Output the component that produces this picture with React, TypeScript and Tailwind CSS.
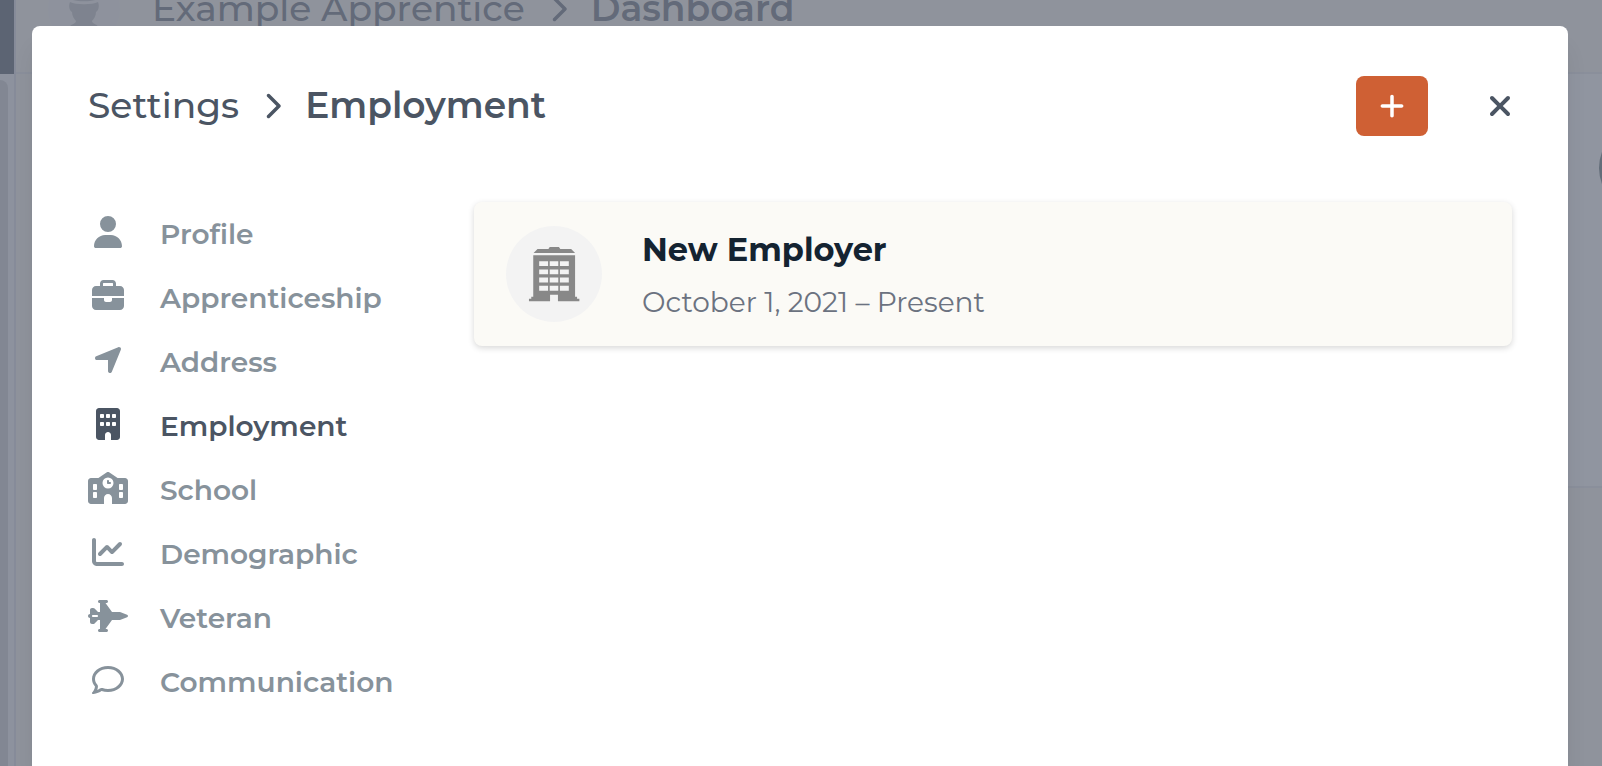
import React, { useState } from 'react';
import {
  FaBriefcase,
  FaBuilding,
  FaChartLine,
  FaChevronRight,
  FaJetFighter,
  FaLocationArrow,
  FaPlus,
  FaRegComment,
  FaSchool,
  FaUser,
  FaXmark,
} from 'react-icons/fa6';

const navItems = [
  { name: 'Profile', icon: FaUser },
  { name: 'Apprenticeship', icon: FaBriefcase },
  { name: 'Address', icon: FaLocationArrow },
  { name: 'Employment', icon: FaBuilding },
  { name: 'School', icon: FaSchool },
  { name: 'Demographic', icon: FaChartLine },
  { name: 'Veteran', icon: FaJetFighter },
  { name: 'Communication', icon: FaRegComment },
];

function Breadcrumb({ parent, current }: { parent: string; current: string }) {
  return (
    <div className="flex items-center gap-5 text-[36px] leading-none text-[#4b5563] whitespace-nowrap">
      <span className="pb-0.5 font-medium">{parent}</span>
      <FaChevronRight className="h-7 w-[26px] shrink-0" />
      <h2 className="pb-0.5 font-semibold">{current}</h2>
    </div>
  );
}

function OfficeBuilding() {
  return (
    <svg viewBox="84 92 156 170" className="h-14 w-[52px]" fill="#888888" aria-hidden="true">
      <path d="M100 113 L112 101 H145 L149 95 H177 L181 101 H214 L226 113 Z" />
      <path
        fillRule="evenodd"
        d="M99 120 H226 V246 H232 V252 H239 V260 H174 V240 H150 V260 H86 V252 H93 V246 H99 Z
          M117 138 V153 H144 V138 Z M149 138 V153 H175 V138 Z M180 138 V153 H207 V138 Z
          M117 163 V178 H144 V163 Z M149 163 V178 H175 V163 Z M180 163 V178 H207 V163 Z
          M117 188 V203 H144 V188 Z M149 188 V203 H175 V188 Z M180 188 V203 H207 V188 Z
          M117 213 V228 H144 V213 Z M149 213 V228 H175 V213 Z M180 213 V228 H207 V213 Z"
      />
    </svg>
  );
}

// Page behind the modal, scrolled down a little
function DashboardBackdrop() {
  return (
    <div className="flex h-screen overflow-hidden bg-[#fbf8f0]" aria-hidden="true">
      <div className="flex w-4 shrink-0 flex-col border-r-2 border-[#d6d7e2] bg-gray-100">
        <div className="h-[74px] bg-[#303e4c]" />
        <div className="mt-[6px] mr-[6px] flex-1 rounded-tr-lg bg-[#c6c6cb]" />
      </div>
      <div className="flex min-w-0 flex-1 flex-col">
        <div className="-mt-[54px] flex h-32 shrink-0 items-center gap-8 border-b-2 border-gray-200 px-8">
          <div className="flex h-[72px] w-[72px] shrink-0 justify-center overflow-hidden rounded-full bg-[#f5f4f3]">
            <svg viewBox="0 0 72 72" className="h-[72px] w-[72px]" fill="#b9b9bb">
              <path d="M22 26 C22 6 50 6 50 26 C44 29 28 29 22 26 Z" />
              <path d="M22 29 C28 32 44 32 50 29 C52 34 50 38 48 39 C48 43 46 46 44 48 C44 51 50 51 51 55 L64 62 V72 H8 V62 L21 55 C22 51 28 51 28 48 C26 46 24 43 24 39 C22 38 20 34 22 29 Z" />
            </svg>
          </div>
          <Breadcrumb parent="Example Apprentice" current="Dashboard" />
        </div>
        <div className="ml-4 flex h-[414px] shrink-0 items-start justify-end border-b-2 border-gray-200 bg-white">
          <div className="mt-12 -mr-[89px] h-[92px] w-[92px] rounded-full bg-[#4c6266]" />
        </div>
      </div>
    </div>
  );
}

export default function App() {
  const [active, setActive] = useState('Employment');

  return (
    <div className="relative h-screen overflow-hidden font-['Montserrat','Inter','Liberation_Sans',sans-serif]">
      <DashboardBackdrop />

      {/* Overlay */}
      <div className="absolute inset-0 flex bg-[#6b7280]/75 pt-[26px] pr-[34px] pl-8">
        <div
          role="dialog"
          aria-label="Settings"
          className="flex-1 rounded-t-lg bg-white px-14 pt-12 shadow-xl"
        >
          <header className="flex h-16 items-center justify-between">
            <Breadcrumb parent="Settings" current={active} />
            <div className="flex items-center gap-[60px]">
              <button
                type="button"
                aria-label="Add employer"
                className="flex h-[60px] w-[72px] items-center justify-center rounded-lg bg-[#cf6034] text-white"
              >
                <FaPlus className="h-7 w-7" />
              </button>
              <button type="button" aria-label="Close" className="text-[#4b5563]">
                <FaXmark className="h-8 w-6" />
              </button>
            </div>
          </header>

          <div className="mt-16 flex">
            <nav className="w-[386px] shrink-0">
              {navItems.map(({ name, icon: Icon }) => (
                <a
                  key={name}
                  href="#"
                  onClick={() => setActive(name)}
                  className={`flex h-16 items-center gap-8 text-[28px] font-semibold ${
                    active === name ? 'text-[#4b5563]' : 'text-[#87929b]'
                  }`}
                >
                  <Icon className="mb-1 h-8 w-10 shrink-0" />
                  <span>{name}</span>
                </a>
              ))}
            </nav>

            <main className="min-w-0 flex-1">
              <div className="flex items-center gap-10 rounded-lg bg-[#fbfaf6] px-8 py-6 shadow-[0_2px_6px_rgba(0,0,0,0.16)]">
                <div className="flex h-24 w-24 shrink-0 items-center justify-center rounded-full bg-[#f3f3f3]">
                  <OfficeBuilding />
                </div>
                <div className="pt-1">
                  <h3 className="text-[32px] leading-10 font-bold text-[#142331]">New Employer</h3>
                  <p className="mt-3 text-[28px] leading-10 text-[#6b7280]">October 1, 2021 – Present</p>
                </div>
              </div>
            </main>
          </div>
        </div>
      </div>
    </div>
  );
}
